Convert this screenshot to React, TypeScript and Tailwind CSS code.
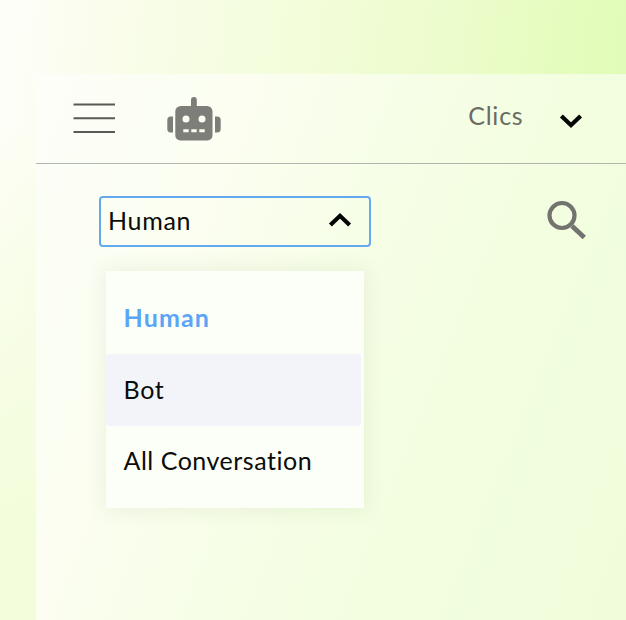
import type { ReactNode } from "react";

function Chevron({ up = false }: { up?: boolean }) {
  return (
    <svg width="24" height="16" viewBox="0 0 24 16" fill="none" stroke="#050505" strokeWidth="4.2">
      <path d={up ? "M2.4 13 L12 3.8 L21.6 13" : "M2.4 3 L12 12.2 L21.6 3"} />
    </svg>
  );
}

function MenuIcon() {
  return (
    <svg width="42" height="32" viewBox="0 0 42 32" stroke="#595a55" strokeWidth="2">
      <path d="M0.5 2.5H42M0.5 16.3H42M0.5 30H42" />
    </svg>
  );
}

function RobotIcon() {
  return (
    <svg width="54" height="44" viewBox="0 0 54 44">
      <g fill="#7d7e79">
        <path d="M24 9V3a2.9 2.9 0 0 1 5.8 0V9H40a5.500 5.500 0 0 1 5.500 5.500V38.500a5 5 0 0 1-5 5H13.300a5 5 0 0 1-5-5V14.500A5.500 5.500 0 0 1 13.800 9Z" />
        <path d="M6 19.500V35.500H3.700a3.400 3.400 0 0 1-3.400-3.400V23A3.500 3.500 0 0 1 3.800 19.500Z" />
        <path d="M48 19.500V35.500h2.300a3.400 3.400 0 0 0 3.400-3.400V23a3.500 3.500 0 0 0-3.500-3.500Z" />
      </g>
      <g fill="#fafdf0">
        <circle cx="19" cy="22" r="3.500" />
        <circle cx="35" cy="22" r="3.500" />
        <path d="M16.300 32.300h5.400v2.900h-5.400zM24.300 32.300h5.400v2.900h-5.400zM32.300 32.300h5.400v2.900h-5.400z" />
      </g>
    </svg>
  );
}

function SearchIcon() {
  return (
    <svg width="40" height="40" viewBox="0 0 40 40" fill="none" stroke="#73746f">
      <circle cx="15" cy="15.500" r="12.500" strokeWidth="4.200" />
      <path d="M25 26 L37.300 37.600" strokeWidth="4.800" />
    </svg>
  );
}

function Option({ children, className = "" }: { children: ReactNode; className?: string }) {
  return <li className={`flex h-[72px] items-center pl-[17.5px] pb-[1px] ${className}`}>{children}</li>;
}

export default function App() {
  return (
    <div className="h-[620px] w-[626px] overflow-hidden bg-[linear-gradient(to_bottom,transparent_20%,#f3fddb_85%),linear-gradient(98deg,#fefef9_0%,#f9fdea_18%,#f3fddb_42%,#ecfccb_65%,#e4fcbc_82%,#dcfbb0_100%)] pl-[36px] pt-[74px] font-['Lato',sans-serif] text-[25px] text-[#0b0c09]">
      <main className="h-[546px] w-[590px] bg-[linear-gradient(112deg,#fcfef8_0%,#fbfef0_28%,#f5fee4_55%,#f1fedd_80%,#f1fcdb_100%)]">
        <header className="flex h-[90px] items-center border-b border-[#b3b6ae] pl-[37px] pr-[43px]">
          <div className="pb-[2px]"><MenuIcon /></div>
          <div className="ml-[52px] pt-[1px]"><RobotIcon /></div>
          <span className="ml-auto pb-[6px] tracking-[0.8px] text-[#696b64]">Clics</span>
          <div className="ml-[35.500px] pt-[4px]"><Chevron /></div>
        </header>
        <div className="flex items-start justify-between pl-[63px] pr-[39px] pt-[32px]">
          <section className="w-[272px]">
            <button className="flex h-[51px] w-full items-center justify-between rounded-[4px] border-2 border-[#64a9ee] pb-[2px] pl-[7px] pr-[17px]">
              <span className="tracking-[0.7px]">Human</span>
              <div className="pb-[2px]"><Chevron up /></div>
            </button>
            <ul className="ml-[7px] mt-[24px] h-[237px] w-[258px] bg-[#fcfef8] pt-[11px] tracking-[0.65px] shadow-[0_0_18px_3px_rgba(80,100,40,0.08)]">
              <Option className="font-bold tracking-[1.15px] text-[#5ba5f7]">Human</Option>
              <Option className="mr-[3px] rounded-[3px] bg-[#f3f4fa]">Bot</Option>
              <Option className="pb-[3px] tracking-[0.52px]">All Conversation</Option>
            </ul>
          </section>
          <div className="pt-[4px]"><SearchIcon /></div>
        </div>
      </main>
    </div>
  );
}
